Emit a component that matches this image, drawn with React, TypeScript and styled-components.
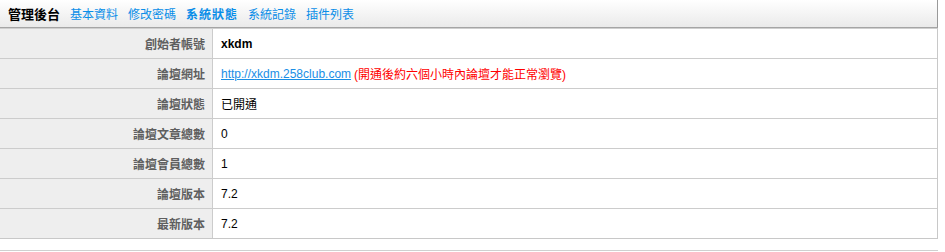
import { Fragment } from 'react';
import { createGlobalStyle, styled } from 'styled-components';

const GlobalStyle = createGlobalStyle`
  body {
    margin: 0;
    background: #fff;
    font-family: "Liberation Sans", Arial, "Noto Sans CJK TC", sans-serif;
    font-size: 12px;
  }
`

const Page = styled.div`
  width: 938px;
`

const Nav = styled.nav`
  display: flex;
  align-items: center;
  gap: 10px;
  height: 27px;
  padding: 0 8px;
  background: linear-gradient(#ffffff, #eaeaea);
  border-bottom: 1px solid #a5a5a5;
  border-right: 1px solid #999;
  font-family: "Liberation Sans", "Noto Sans CJK TC", sans-serif;
  font-size: 12px;
`

const NavTitle = styled.span`
  font-weight: bold;
  color: #000;
  font-size: 13px;
`

const NavLink = styled.a<{ $active?: boolean }>`
  color: #0a8ee8;
  font-weight: ${props => props.$active ? 'bold' : 'normal'};
  letter-spacing: ${props => props.$active ? '1px' : '0'};
  text-decoration: none;
  cursor: pointer;
`

const Table = styled.div`
  display: grid;
  grid-template-columns: 213px 1fr;
  border-top: 1px solid #cfcfcf;
  border-right: 1px solid #c8c8c8;
  border-bottom: 1px solid #c8c8c8;
`

const Label = styled.div<{ $first?: boolean }>`
  display: flex;
  align-items: center;
  justify-content: flex-end;
  height: 29px;
  padding-right: 7px;
  background: #eeeeee;
  border-right: 1px solid #cccccc;
  border-top: ${props => props.$first ? 'none' : '1px solid #cccccc'};
  color: #5f5f5f;
  font-weight: bold;
  font-family: "Noto Sans CJK TC", sans-serif;
  font-size: 12px;
`

const Value = styled.div<{ $first?: boolean }>`
  display: flex;
  align-items: center;
  height: 29px;
  padding-left: 8px;
  color: #000;
  border-top: ${props => props.$first ? 'none' : '1px solid #cccccc'};
`

const Strong = styled.span`
  font-weight: bold;
`

const Url = styled.a`
  color: #1a8ee6;
  text-decoration: underline;
  margin-right: 3px;
`

const Note = styled.span`
  color: #ff0000;
`

const Footer = styled.div`
  margin-top: 11px;
  border-top: 1px solid #d0d0d0;
  height: 1px;
`

const rows: { label: string; value: React.ReactNode }[] = [
  { label: '創始者帳號', value: <Strong>xkdm</Strong> },
  {
    label: '論壇網址',
    value: (
      <>
        <Url>http://xkdm.258club.com</Url>
        <Note>(開通後約六個小時內論壇才能正常瀏覽)</Note>
      </>
    ),
  },
  { label: '論壇狀態', value: '已開通' },
  { label: '論壇文章總數', value: '0' },
  { label: '論壇會員總數', value: '1' },
  { label: '論壇版本', value: '7.2' },
  { label: '最新版本', value: '7.2' },
]

export default function App() {
  return (
    <>
      <GlobalStyle />
      <Page>
        <Nav>
          <NavTitle>管理後台</NavTitle>
          <NavLink>基本資料</NavLink>
          <NavLink>修改密碼</NavLink>
          <NavLink $active>系統狀態</NavLink>
          <NavLink>系統記錄</NavLink>
          <NavLink>插件列表</NavLink>
        </Nav>
        <Table>
          {rows.map((row, i) => (
            <Fragment key={row.label}>
              <Label $first={i === 0}>{row.label}</Label>
              <Value $first={i === 0}>{row.value}</Value>
            </Fragment>
          ))}
        </Table>
        <Footer />
      </Page>
    </>
  )
}
